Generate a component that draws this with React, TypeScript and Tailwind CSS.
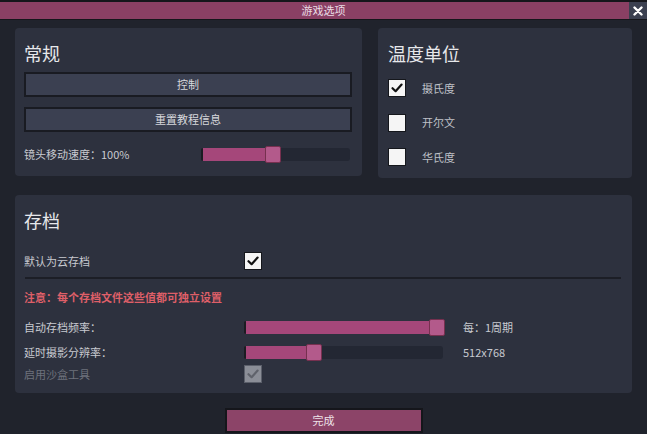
import React from "react";

const FONT = { fontFamily: '"Noto Sans CJK SC", "Noto Sans", sans-serif' };

function Check({ on = false, disabled = false }: { on?: boolean; disabled?: boolean }) {
  return (
    <span
      className={`flex h-[18px] w-[18px] shrink-0 items-center justify-center border ${
        disabled ? "border-[#5b5f6a] bg-[#8b8e97]" : "border-[#15171c] bg-[#f5f5f5]"
      }`}
    >
      {on && (
        <svg width="14" height="14" viewBox="0 0 14 14">
          <path
            d="M2.5 7.2 L5.6 10.2 L11.6 3.6"
            fill="none"
            stroke={disabled ? "#5f626b" : "#111"}
            strokeWidth="2.2"
            strokeLinecap="round"
            strokeLinejoin="round"
          />
        </svg>
      )}
    </span>
  );
}

function Slider({ w, pct }: { w: string; pct: number }) {
  return (
    <div className={`relative h-[13px] shrink-0 rounded-[3px] bg-[#232733] ${w}`}>
      <div
        className="absolute inset-y-0 left-0 rounded-l-[2px] border-l-2 border-[#1b1c22] bg-[#a5477a]"
        style={{ width: `${pct}%` }}
      />
      <div
        className="absolute -top-[2px] h-[17px] w-[16px] -translate-x-[2px] rounded-[2px] border border-[#76304f] bg-[#b35a8b]"
        style={{ left: `calc(${pct}% - 14px)` }}
      />
    </div>
  );
}

function Panel({ title, className, children }: { title: string; className: string; children: React.ReactNode }) {
  return (
    <section className={`rounded-[4px] bg-[#2d313e] pt-[10px] ${className}`}>
      <h2 className="text-[18px] leading-[30px] text-[#e7e8eb]">{title}</h2>
      {children}
    </section>
  );
}

export default function App() {
  return (
    <div className="flex h-[434px] w-[647px] flex-col overflow-hidden bg-[#20232c]" style={FONT}>
      {/* title bar */}
      <div className="flex h-[20px] shrink-0 border-t-2 border-b border-[#15161b] bg-[#15161b]">
        <div className="flex flex-1 items-center justify-center bg-[#8a4064] pl-[18px] text-[11px] text-[#eadde4]">
          游戏选项
        </div>
        <button className="flex w-[18px] items-center justify-center bg-[#3b4050]">
          <svg width="10" height="10" viewBox="0 0 10 10">
            <path d="M1.5 1.5 L8.5 8.5 M8.5 1.5 L1.5 8.5" stroke="#fff" strokeWidth="2.4" strokeLinecap="round" />
          </svg>
        </button>
      </div>

      <div className="flex flex-col px-[15px] pt-[8px]">
        <div className="flex items-start gap-[16px]">
          <Panel title="常规" className="h-[148px] w-[347px] pl-[9px] pr-[10px]">
            <button className="mt-[4px] flex h-[25px] w-full items-center justify-center border-2 border-[#191b22] bg-[#3b4051] text-[11px] text-[#d7d8dc]">
              控制
            </button>
            <button className="mt-[10px] flex h-[25px] w-full items-center justify-center border-2 border-[#191b22] bg-[#3b4051] text-[11px] text-[#d7d8dc]">
              重置教程信息
            </button>
            <div className="mt-[14px] flex h-[16px] items-center">
              <span className="w-[177px] text-[11px] text-[#c8cad0]">镜头移动速度：100%</span>
              <Slider w="w-[149px]" pct={54} />
            </div>
          </Panel>

          <Panel title="温度单位" className="h-[150px] flex-1 pl-[10px]">
            <div className="mt-[11px] flex flex-col gap-[16.5px]">
              {[
                ["摄氏度", true],
                ["开尔文", false],
                ["华氏度", false],
              ].map(([label, on]) => (
                <label key={label as string} className="flex items-center gap-[16px]">
                  <Check on={on as boolean} />
                  <span className="text-[11px] text-[#bfc1c8]">{label as string}</span>
                </label>
              ))}
            </div>
          </Panel>
        </div>

        <Panel title="存档" className="mt-[17px] h-[198px] pl-[9px] pr-[11px]">
          <div className="mt-[17px] flex h-[18px] items-center">
            <span className="w-[220px] text-[11px] text-[#c8cad0]">默认为云存档</span>
            <Check on />
          </div>
          <div className="mt-[7px] ml-px h-[2px] bg-[#1c1e26]" />
          <p className="mt-[10px] text-[11px] font-bold leading-[16px] text-[#de5f68]">
            注意：每个存档文件这些值都可独立设置
          </p>
          <div className="mt-[14px] flex h-[16px] items-center">
            <span className="w-[220px] text-[11px] text-[#c8cad0]">自动存档频率：</span>
            <div className="w-[219px]">
              <Slider w="w-[201px]" pct={100} />
            </div>
            <span className="text-[11px] text-[#c8cad0]">每：1周期</span>
          </div>
          <div className="mt-[9px] flex h-[16px] items-center">
            <span className="w-[220px] text-[11px] text-[#c8cad0]">延时摄影分辨率：</span>
            <div className="w-[219px]">
              <Slider w="w-[199px]" pct={39} />
            </div>
            <span className="text-[11px] text-[#c8cad0]">512x768</span>
          </div>
          <div className="mt-[5px] flex h-[18px] items-center">
            <span className="w-[220px] text-[11px] text-[#6d717c]">启用沙盒工具</span>
            <Check on disabled />
          </div>
        </Panel>

        <div className="mt-[15px] flex justify-center">
          <button className="flex h-[25px] w-[198px] items-center justify-center border-2 border-[#15161b] bg-[#8c4468] text-[11px] text-[#eee3e9]">
            完成
          </button>
        </div>
      </div>
    </div>
  );
}
